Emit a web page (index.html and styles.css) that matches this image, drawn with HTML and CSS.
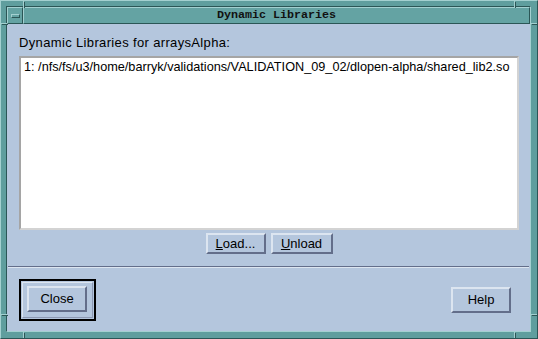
FILE: index.html
```html
<!DOCTYPE html>
<html lang="en">
<head>
    <meta charset="UTF-8">
    <title>Dynamic Libraries</title>
    <link rel="stylesheet" href="styles.css">
</head>
<body>
    <div class="frame">
        <span class="tick tick-t1"></span>
        <span class="tick tick-t2"></span>
        <span class="tick tick-b1"></span>
        <span class="tick tick-b2"></span>
        <span class="tick tick-l1"></span>
        <span class="tick tick-l2"></span>
        <span class="tick tick-r1"></span>
        <span class="tick tick-r2"></span>
        <div class="inner">
            <div class="titlebar">
                <div class="menu-btn"><span class="menu-glyph"></span></div>
                <div class="title">Dynamic Libraries</div>
            </div>
            <div class="client">
                <div class="work">
                    <div class="label">Dynamic Libraries for arraysAlpha:</div>
                    <div class="list">
                        <div class="item">1: /nfs/fs/u3/home/barryk/validations/VALIDATION_09_02/dlopen-alpha/shared_lib2.so</div>
                    </div>
                    <div class="row">
                        <button class="btn btn-small"><u>L</u>oad...</button>
                        <button class="btn btn-small btn-unload"><u>U</u>nload</button>
                    </div>
                </div>
                <div class="sep"></div>
                <div class="actions">
                    <div class="default-ring">
                        <div class="default-inner">
                            <button class="btn btn-big">Close</button>
                        </div>
                    </div>
                    <button class="btn btn-big">Help</button>
                </div>
            </div>
        </div>
    </div>
</body>
</html>
```

FILE: styles.css
```css
body {
    margin: 0;
    background-color: #5f9e9e;
    font-family: "Liberation Sans", Arial, sans-serif;
    font-size: 13px;
    color: #000;
}
.frame {
    position: relative;
    box-sizing: border-box;
    width: 538px;
    height: 339px;
    background-color: #5f9e9e;
    border-top: 1px solid #a3d0d0;
    border-left: 1px solid #a3d0d0;
    border-right: 1px solid #2b5656;
    border-bottom: 1px solid #2b5656;
    padding: 5px 6px 6px 5px;
}
.tick {
    position: absolute;
    background-color: #a3d0d0;
    box-shadow: 1px 1px 0 #2b5656;
}
.tick-t1, .tick-t2, .tick-b1, .tick-b2 {
    width: 1px;
    height: 6px;
}
.tick-l1, .tick-l2, .tick-r1, .tick-r2 {
    width: 6px;
    height: 1px;
}
.tick-t1 { left: 22px; top: 0; }
.tick-t2 { left: 513px; top: 0; }
.tick-b1 { left: 22px; bottom: 0; }
.tick-b2 { left: 513px; bottom: 0; }
.tick-l1 { left: 0; top: 22px; }
.tick-l2 { left: 0; top: 313px; }
.tick-r1 { right: 0; top: 22px; }
.tick-r2 { right: 0; top: 313px; }
.inner {
    height: 100%;
    box-sizing: border-box;
    display: flex;
    flex-direction: column;
    border-top: 1px solid #2b5656;
    border-left: 1px solid #2b5656;
    border-right: 1px solid #a3d0d0;
    border-bottom: 1px solid #a3d0d0;
}
.titlebar {
    display: flex;
    height: 17px;
    flex-shrink: 0;
}
.menu-btn {
    box-sizing: border-box;
    width: 16px;
    display: flex;
    align-items: center;
    justify-content: center;
    background-color: #64a3a3;
    border-top: 1px solid #a3d0d0;
    border-left: 1px solid #a3d0d0;
    border-right: 1px solid #2b5656;
    border-bottom: 1px solid #2b5656;
}
.menu-glyph {
    box-sizing: border-box;
    width: 9px;
    height: 4px;
    border-top: 1px solid #a3d0d0;
    border-left: 1px solid #a3d0d0;
    border-right: 1px solid #2b5656;
    border-bottom: 1px solid #2b5656;
}
.title {
    flex: 1;
    box-sizing: border-box;
    background-color: #64a3a3;
    border-top: 1px solid #a3d0d0;
    border-left: 1px solid #a3d0d0;
    border-right: 1px solid #2b5656;
    border-bottom: 1px solid #2b5656;
    text-align: center;
    font-family: "Liberation Mono", "DejaVu Sans Mono", monospace;
    font-weight: bold;
    font-size: 11.7px;
    line-height: 15px;
    color: #111;
}
.client {
    flex: 1;
    display: flex;
    flex-direction: column;
    background-color: #b4c6dd;
}
.work {
    padding: 12px 11px 0 12px;
}
.label {
    line-height: 14px;
    margin-bottom: 6px;
    letter-spacing: 0.35px;
}
.list {
    box-sizing: border-box;
    height: 174px;
    background-color: #fff;
    border-top: 2px solid #a5a5a5;
    border-left: 2px solid #a5a5a5;
    border-right: 2px solid #d3d3d3;
    border-bottom: 2px solid #d3d3d3;
    padding: 2px 3px;
}
.item {
    font-size: 12.7px;
    line-height: 14px;
    white-space: nowrap;
}
.row {
    display: flex;
    justify-content: center;
    gap: 5px;
    margin-top: 3px;
}
.btn {
    box-sizing: border-box;
    font-family: "Liberation Sans", Arial, sans-serif;
    font-size: 13px;
    color: #000;
    background-color: #b4c6dd;
    border-top: 2px solid #dce5f0;
    border-left: 2px solid #dce5f0;
    border-right: 2px solid #636e8a;
    border-bottom: 2px solid #636e8a;
    padding: 0;
    margin: 0;
}
.btn-small {
    width: 60px;
    height: 21px;
}
.btn-unload {
    width: 62px;
}
.btn-big {
    width: 60px;
    height: 26px;
}
.sep {
    margin: 12px 1px 0 1px;
    height: 1px;
    background-color: #636e8a;
    border-bottom: 1px solid #dce5f0;
}
.actions {
    flex: 1;
    display: flex;
    align-items: center;
    justify-content: space-between;
    padding: 0 19px 0 12px;
}
.default-ring {
    border: 2px solid #000;
    padding: 1px;
}
.default-inner {
    border-top: 1px solid #dce5f0;
    border-left: 1px solid #dce5f0;
    border-right: 1px solid #8d99b3;
    border-bottom: 1px solid #8d99b3;
    padding: 3px 5px 5px 4px;
    display: flex;
}
```
